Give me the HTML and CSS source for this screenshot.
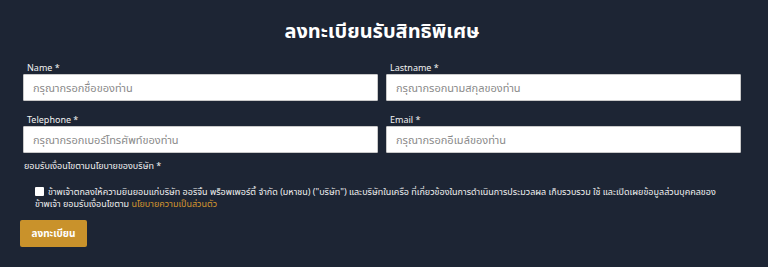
FILE: index.html
```html
<!DOCTYPE html>
<html lang="th">
<head>
<meta charset="utf-8">
<link rel="stylesheet" href="styles.css">
</head>
<body>
<div class="page">
  <h1 class="title">ลงทะเบียนรับสิทธิพิเศษ</h1>
  <form class="form">
    <div class="grid">
      <div class="field">
        <label class="label">Name *</label>
        <input class="input" type="text" placeholder="กรุณากรอกชื่อของท่าน">
      </div>
      <div class="field">
        <label class="label">Lastname *</label>
        <input class="input" type="text" placeholder="กรุณากรอกนามสกุลของท่าน">
      </div>
      <div class="field">
        <label class="label">Telephone *</label>
        <input class="input" type="text" placeholder="กรุณากรอกเบอร์โทรศัพท์ของท่าน">
      </div>
      <div class="field">
        <label class="label">Email *</label>
        <input class="input" type="text" placeholder="กรุณากรอกอีเมล์ของท่าน">
      </div>
    </div>
    <div class="consent-title">ยอมรับเงื่อนไขตามนโยบายของบริษัท *</div>
    <div class="consent"><span class="box"></span>ข้าพเจ้าตกลงให้ความยินยอมแก่บริษัท ออริจิ้น พร็อพเพอร์ตี้ จำกัด (มหาชน) ("บริษัท") และบริษัทในเครือ ที่เกี่ยวข้องในการดำเนินการประมวลผล เก็บรวบรวม ใช้ และเปิดเผยข้อมูลส่วนบุคคลของข้าพเจ้า ยอมรับเงื่อนไขตาม <a class="link" href="#">นโยบายความเป็นส่วนตัว</a></div>
    <button class="btn" type="button">ลงทะเบียน</button>
  </form>
</div>
</body>
</html>
```
FILE: styles.css
```css
* { box-sizing: border-box; }
html, body { margin: 0; padding: 0; }
body {
  background: #1d2534;
  font-family: "Noto Sans", "Noto Sans Thai", "Liberation Sans", sans-serif;
  color: #ffffff;
  width: 768px;
  height: 267px;
  overflow: hidden;
}
.page { padding: 14px 27px 0 23px; }
.title {
  margin: 0;
  text-align: center;
  font-size: 20px;
  font-weight: 700;
  line-height: 34px;
}
.form { margin-top: 13px; }
.grid {
  display: grid;
  grid-template-columns: 1fr 1fr;
  column-gap: 8px;
  row-gap: 12px;
}
.field { display: flex; flex-direction: column; }
.label {
  font-size: 9px;
  line-height: 13px;
  padding-left: 4px;
  color: #f1f1f1;
}
.input {
  height: 27px;
  border: 1px solid #c9c9c9;
  border-radius: 1px;
  background: #fff;
  padding: 0 9px;
  font-family: "Noto Sans", "Noto Sans Thai", sans-serif;
  font-size: 11px;
  color: #333;
  outline: none;
}
.input::placeholder { color: #8a8a8a; }
.consent-title {
  margin-top: 7px;
  font-size: 9px;
  line-height: 12px;
  padding-left: 1px;
  color: #f1f1f1;
}
.consent {
  margin-top: 14px;
  padding-left: 12px;
  padding-right: 22px;
  font-size: 9px;
  line-height: 12px;
  color: #f1f1f1;
}
.box {
  display: inline-block;
  width: 9px;
  height: 9px;
  background: #fff;
  border-radius: 1px;
  margin-right: 4px;
  vertical-align: -1px;
}
.link {
  display: inline-block;
  line-height: 12px;
  color: #d4952f;
  text-decoration: none;
}
.btn {
  display: block;
  margin-top: 10px;
  margin-left: -3px;
  width: 67px;
  height: 27px;
  background: #c9922b;
  border: none;
  border-radius: 2px;
  color: #fff;
  font-family: "Noto Sans", "Noto Sans Thai", sans-serif;
  font-weight: 700;
  font-size: 10px;
  padding: 0;
}
```
